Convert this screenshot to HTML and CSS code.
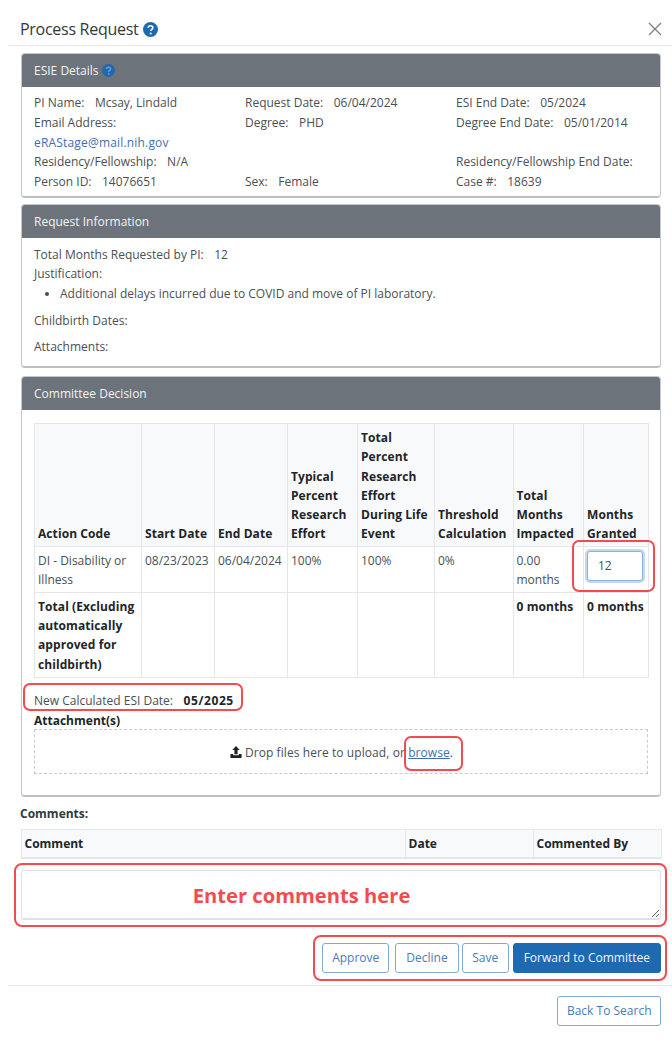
FILE: index.html
```html
<!DOCTYPE html>
<html lang="en">
<head>
<meta charset="utf-8">
<title>Process Request</title>
<link rel="stylesheet" href="styles.css">
</head>
<body>
<div class="page">
  <header class="modal-head">
    <div class="title-wrap">
      <h1 class="title">Process Request</h1>
      <svg class="help help-lg" viewBox="0 0 16 16"><circle cx="8" cy="8" r="8" fill="#1f69b1"/><path d="M5.5 6.2C5.6 4.7 6.7 4 8 4c1.4 0 2.5.8 2.5 2.1 0 1-.6 1.5-1.3 2-.6.4-.9.7-.9 1.3v.3" fill="none" stroke="#fff" stroke-width="1.7"/><circle cx="8.2" cy="12.2" r="1.1" fill="#fff"/></svg>
    </div>
    <svg class="close" viewBox="0 0 14 14"><path d="M1 1l12 12M13 1L1 13" stroke="#7b7f84" stroke-width="1.3" fill="none"/></svg>
  </header>

  <section class="card card-esie">
    <div class="card-head"><span>ESIE Details</span>
      <svg class="help help-sm" viewBox="0 0 16 16"><circle cx="8" cy="8" r="8" fill="#1f69b1"/><path d="M5.5 6.2C5.6 4.7 6.7 4 8 4c1.4 0 2.5.8 2.5 2.1 0 1-.6 1.5-1.3 2-.6.4-.9.7-.9 1.3v.3" fill="none" stroke="#6c9fd0" stroke-width="1.7"/><circle cx="8.2" cy="12.2" r="1.1" fill="#6c9fd0"/></svg>
    </div>
    <div class="details">
      <div class="cell"><span class="lbl">PI Name:</span>Mcsay, Lindald</div>
      <div class="cell"><span class="lbl">Request Date:</span>06/04/2024</div>
      <div class="cell"><span class="lbl">ESI End Date:</span>05/2024</div>
      <div class="cell"><span class="lbl">Email Address:</span><br><a class="mail" href="#">eRAStage@mail.nih.gov</a></div>
      <div class="cell"><span class="lbl">Degree:</span>PHD</div>
      <div class="cell"><span class="lbl">Degree End Date:</span>05/01/2014</div>
      <div class="cell"><span class="lbl">Residency/Fellowship:</span>N/A</div>
      <div class="cell"></div>
      <div class="cell">Residency/Fellowship End Date:</div>
      <div class="cell"><span class="lbl">Person ID:</span>14076651</div>
      <div class="cell"><span class="lbl">Sex:</span>Female</div>
      <div class="cell"><span class="lbl">Case #:</span>18639</div>
    </div>
  </section>

  <section class="card card-req">
    <div class="card-head"><span>Request Information</span></div>
    <div class="req-body">
      <div class="req-line"><span class="lbl">Total Months Requested by PI:</span>12</div>
      <div class="req-line">Justification:</div>
      <ul class="just"><li>Additional delays incurred due to COVID and move of PI laboratory.</li></ul>
      <div class="req-line req-gap">Childbirth Dates:</div>
      <div class="req-line req-gap">Attachments:</div>
    </div>
  </section>

  <section class="card card-dec">
    <div class="card-head"><span>Committee Decision</span></div>
    <div class="dec-body">
      <table class="grid">
        <colgroup>
          <col class="c1"><col class="c2"><col class="c3"><col class="c4"><col class="c5"><col class="c6"><col class="c7"><col class="c8">
        </colgroup>
        <thead>
          <tr>
            <th>Action Code</th><th>Start Date</th><th>End Date</th>
            <th>Typical Percent Research Effort</th>
            <th>Total Percent Research Effort During Life Event</th>
            <th>Threshold Calculation</th>
            <th>Total Months Impacted</th>
            <th>Months Granted</th>
          </tr>
        </thead>
        <tbody>
          <tr class="row-data">
            <td>DI - Disability or Illness</td><td>08/23/2023</td><td>06/04/2024</td><td>100%</td><td>100%</td><td>0%</td><td>0.00 months</td>
            <td class="input-cell"><input class="months" type="text" value="12"></td>
          </tr>
          <tr class="row-total">
            <td>Total (Excluding automatically approved for childbirth)</td><td></td><td></td><td></td><td></td><td></td><td>0 months</td><td>0 months</td>
          </tr>
        </tbody>
      </table>
      <div class="new-date"><span class="lbl">New Calculated ESI Date:</span><strong>05/2025</strong></div>
      <div class="att-label">Attachment(s)</div>
      <div class="drop">
        <svg class="upload" viewBox="0 0 14 14"><path d="M7 0l4 4.3H8.7V9H5.3V4.3H3z" fill="#222"/><path d="M1 8.5h3V10h6V8.5h3V13H1z" fill="#222"/></svg>
        <span>Drop files here to upload, or <a class="browse" href="#">browse</a>.</span>
      </div>
    </div>
  </section>

  <div class="comments-label">Comments:</div>
  <table class="ctable">
    <colgroup><col class="k1"><col class="k2"><col class="k3"></colgroup>
    <thead><tr><th>Comment</th><th>Date</th><th>Commented By</th></tr></thead>
  </table>
  <textarea class="comment-box" aria-label="Comment"></textarea>

  <div class="actions">
    <button class="btn btn-approve">Approve</button>
    <button class="btn btn-decline">Decline</button>
    <button class="btn btn-save">Save</button>
    <button class="btn btn-primary">Forward to Committee</button>
  </div>
  <div class="foot">
    <button class="btn btn-back">Back To Search</button>
  </div>

  <div class="mark mark-input"></div>
  <div class="mark mark-date"></div>
  <div class="mark mark-browse"></div>
  <div class="mark mark-comment"><span>Enter comments here</span></div>
  <div class="mark mark-actions"></div>
</div>
</body>
</html>
```

FILE: styles.css
```css
* { box-sizing: border-box; }
html, body { margin: 0; padding: 0; background: #fff; }
body { font-family: "Open Sans", "Liberation Sans", sans-serif; font-size: 12px; color: #4a4f54; }
.page { position: relative; width: 672px; height: 1043px; overflow: hidden; }

.modal-head { margin-left: 8px; height: 46px; padding: 13px 10px 0 12px; border-bottom: 1px solid #e6e8ea; display: flex; align-items: center; justify-content: space-between; }
.title-wrap { display: flex; align-items: center; gap: 5px; }
.title { margin: 0; font-size: 16px; font-weight: 400; color: #33383d; letter-spacing: -0.28px; }
.help { display: block; flex: none; }
.help-lg { width: 15px; height: 15px; }
.help-sm { width: 13px; height: 13px; }
.close { width: 14px; height: 14px; display: block; }

.card { margin: 0 11px 0 21px; border: 1px solid #c5c8cc; border-bottom: 2px solid #bcc0c4; border-radius: 4px; overflow: hidden; }
.card-esie { margin-top: 7px; height: 145px; }
.card-req { margin-top: 6px; height: 164px; }
.card-dec { margin-top: 8px; height: 421px; }
.card-head { height: 34px; margin: -1px -1px 0; background: #6c737b; color: #f2f3f4; padding: 0 13px; display: flex; align-items: center; gap: 3px; }

.lbl { margin-right: 10.5px; }
.details { display: grid; grid-template-columns: 211px 211px 1fr; padding: 6px 12px 0; line-height: 19.75px; }
.mail, .browse { color: #3f6fb0; }
.mail { text-decoration: none; letter-spacing: 0.18px; }
.browse { text-decoration: underline; }

.req-body { padding: 7px 12px 0; line-height: 19.25px; }
.just { margin: 0; padding-left: 26px; }
.req-gap { margin-top: 6.5px; }
.just + .req-gap { margin-top: 8px; }

.dec-body { padding: 13px 12px 0; }
.grid { width: 614px; border-collapse: collapse; table-layout: fixed; line-height: 19.3px; }
.c1 { width: 107px; } .c2 { width: 73px; } .c3 { width: 73px; } .c4 { width: 70px; }
.c5 { width: 77px; } .c6 { width: 78.5px; } .c7 { width: 70.5px; } .c8 { width: 65px; }
.grid th, .grid td { border: 1px solid #e4e6e9; padding: 4px 3px 2px; }
.grid th { background: #f8f9fa; color: #212529; font-weight: 700; text-align: left; vertical-align: bottom; letter-spacing: 0.08px; }
.grid td { vertical-align: top; }
.row-data { height: 46px; }
.row-total { height: 85px; }
.row-total td { font-weight: 700; color: #212529; letter-spacing: 0.08px; }
.input-cell { position: relative; }
.months { display: block; width: 56px; height: 30px; margin: 0; padding: 0 10px; font: inherit; color: #4a4f54; border: 1px solid #8ab2dc; border-radius: 3px; box-shadow: 0 0 0 2px #c6d8ec; outline: none; }

.new-date { margin-top: 13px; height: 19px; line-height: 19px; }
.new-date strong { color: #212529; letter-spacing: 0.6px; }
.att-label { font-weight: 700; color: #212529; line-height: 19px; height: 18px; margin-top: 1px; }
.drop { height: 45px; border: 1px dashed #c8cbce; display: flex; align-items: center; justify-content: center; gap: 2px; padding-top: 2px; }
.drop span { letter-spacing: 0.08px; }
.upload { width: 14px; height: 13px; display: block; }

.comments-label { margin: 7px 0 0 20px; font-weight: 700; color: #33383d; line-height: 19px; }
.ctable { margin: 6px 0 0 20.5px; width: 640px; border-collapse: collapse; table-layout: fixed; }
.k1 { width: 384px; } .k2 { width: 128px; } .k3 { width: 128px; }
.ctable th { height: 28px; background: #f8f9fa; border: 1px solid #e4e6e9; border-bottom-width: 2px; color: #212529; font-weight: 700; text-align: left; padding: 0 3px; }

.comment-box { display: block; margin: 11px 0 0 21px; width: 640px; height: 50px; border: 1px solid #dfe2e6; border-bottom-width: 2px; border-radius: 3px; resize: vertical; background: #fff; }

.actions { margin: 23px 11px 0 0; display: flex; justify-content: flex-end; gap: 4px; }
.btn { height: 30px; padding: 0 10px; font: inherit; color: #4b7cb8; background: #fff; border: 1px solid #7faad6; border-radius: 3px; white-space: nowrap; }
.btn-approve { padding: 0 9px; margin-right: 2px; }
.btn-decline { margin-right: -1px; }
.btn-save { padding: 0 9.5px; }
.btn-back { padding: 0 8.5px; }
.btn-primary { background: #1f69b1; border-color: #1f69b1; color: #f2f6fb; font-weight: 500; padding: 0 10px; }
.foot { margin: 12px 0 0 8px; padding: 10px 11px 0 0; border-top: 1px solid #e4e6e9; display: flex; justify-content: flex-end; }

.mark { position: absolute; border: 2px solid #f34b50; border-radius: 7px; }
.mark-input { left: 572px; top: 540px; width: 83px; height: 52px; }
.mark-date { left: 23px; top: 683px; width: 220px; height: 28px; }
.mark-browse { left: 404px; top: 736px; width: 59px; height: 35px; }
.mark-comment { left: 14px; top: 863px; width: 653px; height: 64px; border-radius: 8px; display: flex; align-items: center; justify-content: center; }
.mark-comment span { color: #f34b50; font-size: 20.2px; font-weight: 700; margin-left: -78px; }
.mark-actions { left: 313px; top: 935px; width: 354px; height: 46px; border-radius: 8px; }
```
